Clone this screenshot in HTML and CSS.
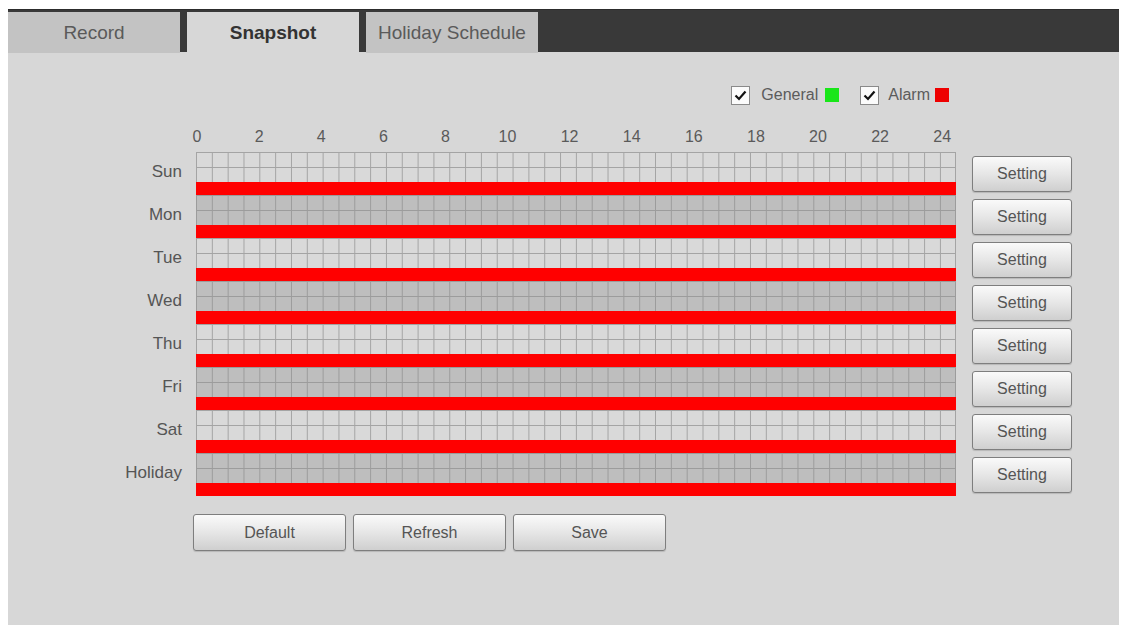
FILE: index.html
```html
<!DOCTYPE html>
<html>
<head>
    <title>Snapshot Schedule</title>
    <link rel="stylesheet" href="styles.css">
</head>
<body>
    <div class="wrap">
        <div class="tabs">
            <div class="tab">Record</div>
            <div class="tab active">Snapshot</div>
            <div class="tab">Holiday Schedule</div>
        </div>

        <div class="panel">
            <div class="legend">
                <span class="check"><svg width="13" height="11" viewBox="0 0 13 11"><path d="M1.5 5.5 L5 9 L11.5 1.5" fill="none" stroke="#111" stroke-width="2.2"/></svg></span>
                <span class="legend-text">General</span>
                <span class="swatch green"></span>
                <span class="check second"><svg width="13" height="11" viewBox="0 0 13 11"><path d="M1.5 5.5 L5 9 L11.5 1.5" fill="none" stroke="#111" stroke-width="2.2"/></svg></span>
                <span class="legend-text">Alarm</span>
                <span class="swatch red"></span>
            </div>

            <div class="hours">
                <span>0</span><span>2</span><span>4</span><span>6</span><span>8</span><span>10</span><span>12</span>
                <span>14</span><span>16</span><span>18</span><span>20</span><span>22</span><span>24</span>
            </div>

            <div class="rows">
                <div class="row">
                    <div class="day">Sun</div>
                    <div class="track"><div class="grid"></div><div class="alarm"></div></div>
                    <button class="btn setting">Setting</button>
                </div>
                <div class="row">
                    <div class="day">Mon</div>
                    <div class="track"><div class="grid dark"></div><div class="alarm"></div></div>
                    <button class="btn setting">Setting</button>
                </div>
                <div class="row">
                    <div class="day">Tue</div>
                    <div class="track"><div class="grid"></div><div class="alarm"></div></div>
                    <button class="btn setting">Setting</button>
                </div>
                <div class="row">
                    <div class="day">Wed</div>
                    <div class="track"><div class="grid dark"></div><div class="alarm"></div></div>
                    <button class="btn setting">Setting</button>
                </div>
                <div class="row">
                    <div class="day">Thu</div>
                    <div class="track"><div class="grid"></div><div class="alarm"></div></div>
                    <button class="btn setting">Setting</button>
                </div>
                <div class="row">
                    <div class="day">Fri</div>
                    <div class="track"><div class="grid dark"></div><div class="alarm"></div></div>
                    <button class="btn setting">Setting</button>
                </div>
                <div class="row">
                    <div class="day">Sat</div>
                    <div class="track"><div class="grid"></div><div class="alarm"></div></div>
                    <button class="btn setting">Setting</button>
                </div>
                <div class="row">
                    <div class="day">Holiday</div>
                    <div class="track"><div class="grid dark"></div><div class="alarm"></div></div>
                    <button class="btn setting">Setting</button>
                </div>
            </div>

            <div class="actions">
                <button class="btn action">Default</button>
                <button class="btn action">Refresh</button>
                <button class="btn action">Save</button>
            </div>
        </div>
    </div>
</body>
</html>
```

FILE: styles.css
```css
body {
  margin: 0;
  background-color: #fff;
  font-family: "Liberation Sans", Arial, sans-serif;
  color: #555;
}
.wrap {
  width: 1111px;
  margin: 9px 0 0 8px;
}
.tabs {
  display: flex;
  gap: 7px;
  height: 43px;
  padding-top: 2px;
  box-sizing: border-box;
  background-color: #393939;
  border-top: 1px solid #2c2c2c;
}
.tab {
  width: 172px;
  height: 41px;
  line-height: 41px;
  text-align: center;
  font-size: 19px;
  background-color: #c3c3c3;
  color: #5a5a5a;
}
.tab.active {
  background-color: #d7d7d7;
  color: #333;
  font-weight: bold;
}
.panel {
  height: 573px;
  background-color: #d7d7d7;
}
.legend {
  display: flex;
  align-items: center;
  width: 941px;
  justify-content: flex-end;
  padding-top: 33px;
  height: 20px;
  font-size: 16px;
}
.check {
  width: 17px;
  height: 17px;
  border: 1px solid #8a8a8a;
  background-color: #fbfbfb;
  display: flex;
  align-items: center;
  justify-content: center;
  margin-right: 11px;
}
.check.second {
  margin-left: 21px;
  margin-right: 9px;
}
.legend-text {
  color: #5c5c5c;
}
.swatch {
  width: 14px;
  height: 14px;
  margin-left: 7px;
}
.swatch.green {
  background-color: #19e619;
}
.swatch.red {
  background-color: #ee0000;
  margin-left: 5px;
}
.hours {
  display: flex;
  margin: 22px 0 0 158px;
  height: 20px;
  line-height: 20px;
  font-size: 16px;
  color: #5a5a5a;
}
.hours span {
  width: 62.1px;
  text-align: center;
  flex: none;
}
.rows {
  margin-top: 5px;
}
.row {
  display: flex;
  height: 43px;
}
.day {
  width: 174px;
  margin-right: 14px;
  text-align: right;
  font-size: 17px;
  padding-top: 10px;
  line-height: 20px;
  box-sizing: border-box;
  color: #555;
}
.track {
  width: 760px;
}
.grid {
  height: 30px;
  box-sizing: border-box;
  background-color: #d9d9d9;
  background-image:
    linear-gradient(to right, #a4a4a4 1px, transparent 1px),
    linear-gradient(to bottom, #a4a4a4 1px, transparent 1px);
  background-size: 15.833px 15px;
  border-right: 1px solid #a4a4a4;
}
.grid.dark {
  background-color: #bebebe;
  background-image:
    linear-gradient(to right, #9c9c9c 1px, transparent 1px),
    linear-gradient(to bottom, #9c9c9c 1px, transparent 1px);
  border-right-color: #9c9c9c;
}
.alarm {
  height: 13px;
  background-color: #ff0000;
}
.btn {
  font-family: "Liberation Sans", Arial, sans-serif;
  font-size: 16px;
  color: #555;
  background: linear-gradient(to bottom, #fafafa, #e6e6e6 50%, #cfcfcf);
  border: 1px solid #7e7e7e;
  border-radius: 3px;
  box-shadow: 0 1px 1px rgba(0, 0, 0, 0.15);
  padding: 0;
  cursor: pointer;
}
.setting {
  width: 100px;
  height: 36px;
  margin: 4px 0 0 16px;
}
.actions {
  display: flex;
  gap: 7px;
  margin: 18px 0 0 185px;
}
.action {
  width: 153px;
  height: 37px;
}
```
